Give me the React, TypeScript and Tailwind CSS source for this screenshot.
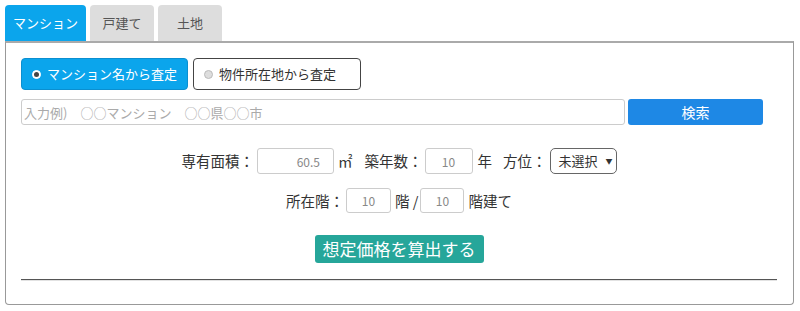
import { useState } from 'react'

const font = { fontFamily: '"Noto Sans CJK JP", "Liberation Sans", sans-serif' }

export default function App() {
  const [mode, setMode] = useState<'name' | 'address'>('name')

  return (
    <div className="w-[800px] h-[311px] bg-white pt-[5px] px-[5px] text-[#333]" style={font}>
      {/* tabs */}
      <div className="flex gap-[4px] h-[36px]">
        <div className="w-[81px] bg-[#0ba5ec] text-white text-[13px] rounded-t-[4px] flex items-center justify-center">マンション</div>
        <div className="w-[64px] bg-[#dddddd] text-[#555] text-[13px] rounded-t-[4px] flex items-center justify-center">戸建て</div>
        <div className="w-[64px] bg-[#dddddd] text-[#555] text-[13px] rounded-t-[4px] flex items-center justify-center">土地</div>
      </div>

      {/* panel */}
      <div className="w-[789px] h-[264px] border border-[#999] border-t-2 border-t-[#aaa] rounded-b-[4px] pt-[15px] px-[15px]">
        <div className="flex gap-[5px]">
          <button
            onClick={() => setMode('name')}
            className={`w-[167px] h-[32px] rounded-[4px] flex items-center gap-[6px] pl-[10px] text-[13px] border ${mode === 'name' ? 'bg-[#0ba5ec] border-[#0b8fd0] text-white' : 'bg-white border-[#444] text-[#333]'}`}
          >
            <span className={`w-[9px] h-[9px] rounded-full border ${mode === 'name' ? 'bg-white border-white flex items-center justify-center' : 'bg-[#ddd] border-[#bbb]'}`}>
              {mode === 'name' && <span className="w-[5px] h-[5px] rounded-full bg-[#444]" />}
            </span>
            マンション名から査定
          </button>
          <button
            onClick={() => setMode('address')}
            className={`w-[168px] h-[32px] rounded-[4px] flex items-center gap-[6px] pl-[10px] text-[13px] border ${mode === 'address' ? 'bg-[#0ba5ec] border-[#0b8fd0] text-white' : 'bg-white border-[#444] text-[#333]'}`}
          >
            <span className={`w-[9px] h-[9px] rounded-full border ${mode === 'address' ? 'bg-white border-white flex items-center justify-center' : 'bg-[#ddd] border-[#bbb]'}`}>
              {mode === 'address' && <span className="w-[5px] h-[5px] rounded-full bg-[#444]" />}
            </span>
            物件所在地から査定
          </button>
        </div>

        <div className="flex gap-[3px] mt-[9px]">
          <input
            className="w-[604px] h-[26px] border border-[#ccc] rounded-[3px] px-[2px] text-[13px] placeholder:text-[#aaa] outline-none"
            placeholder="入力例)　○○マンション　○○県○○市"
          />
          <button className="w-[135px] h-[26px] bg-[#1e88e5] text-white text-[14px] rounded-[3px]">検索</button>
        </div>

        <div className="w-[756px] flex justify-center items-center mt-[23px] text-[14.5px] h-[26px]">
          <span>専有面積：</span>
          <input defaultValue="60.5" className="ml-[3px] w-[77px] h-[26px] border border-[#ccc] rounded-[3px] text-right pr-[13px] text-[12px] text-[#888] outline-none" />
          <span className="ml-[4px]">㎡</span>
          <span className="ml-[12px]">築年数：</span>
          <input defaultValue="10" className="ml-[2px] w-[48px] h-[26px] border border-[#ccc] rounded-[3px] text-center text-[12px] text-[#888] outline-none" />
          <span className="ml-[5px]">年</span>
          <span className="ml-[11px]">方位：</span>
          <div className="ml-[3px] w-[67px] h-[26px] border border-[#666] rounded-[5px] flex items-center pl-[8px] text-[13px]">
            未選択<span className="ml-[8px] text-[7px]">▼</span>
          </div>
        </div>

        <div className="w-[756px] flex justify-center items-center mt-[14px] text-[14.5px] h-[25px]">
          <span>所在階：</span>
          <input defaultValue="10" className="ml-[2px] w-[45px] h-[25px] border border-[#ccc] rounded-[3px] text-center text-[12px] text-[#888] outline-none" />
          <span className="ml-[4px]">階 /</span>
          <input defaultValue="10" className="ml-[2px] w-[44px] h-[25px] border border-[#ccc] rounded-[3px] text-center text-[12px] text-[#888] outline-none" />
          <span className="ml-[4px]">階建て</span>
        </div>

        <div className="w-[756px] flex justify-center mt-[22px]">
          <button className="w-[169px] h-[28px] bg-[#26a69a] text-white text-[17px] rounded-[3px]">想定価格を算出する</button>
        </div>

        <div className="w-[756px] mt-[16px] border-t border-t-[#555] border-b border-b-[#e2e2e2]" />
      </div>
    </div>
  )
}
